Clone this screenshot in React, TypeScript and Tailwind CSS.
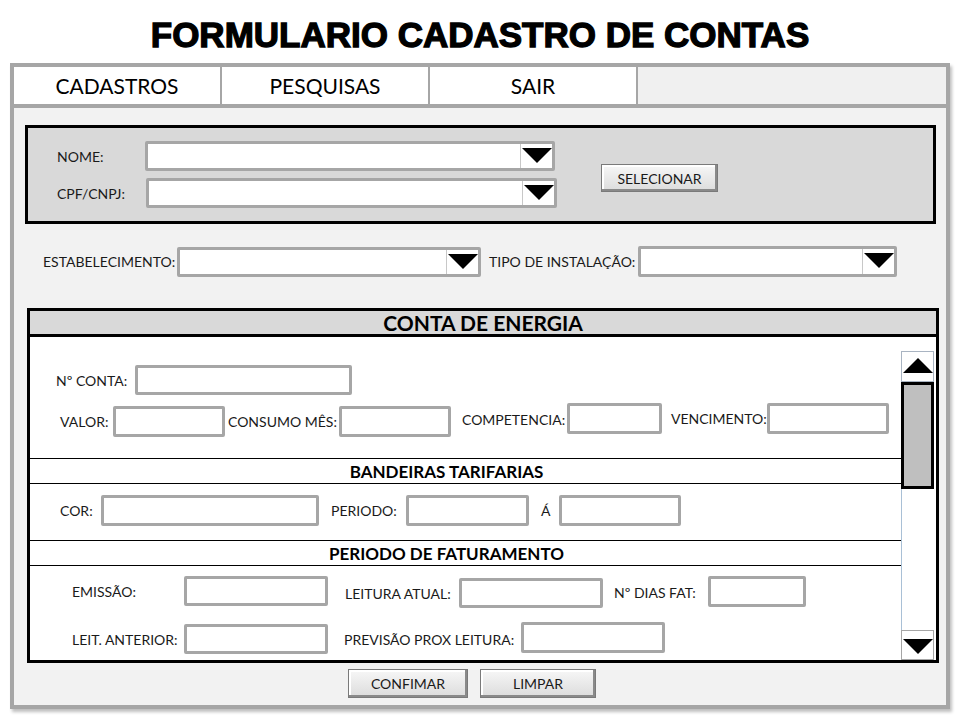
import React from "react";

const Down = ({ w = 30, h = 15 }: { w?: number; h?: number }) => (
  <svg width={w} height={h} viewBox="0 0 30 15">
    <polygon points="0,0 30,0 15,15" fill="#000" />
  </svg>
);
const Up = () => (
  <svg width={30} height={15} viewBox="0 0 30 15">
    <polygon points="0,15 30,15 15,0" fill="#000" />
  </svg>
);

function Dropdown({ className }: { className: string }) {
  return (
    <div className={"flex border-[3px] border-[#a6a6a6] bg-white rounded-[2px] " + className}>
      <div className="flex-1" />
      <div className="w-[32px] border-l border-[#c8c8c8] flex justify-center items-start pt-[4px]">
        <Down />
      </div>
    </div>
  );
}

function Input({ className }: { className: string }) {
  return <div className={"border-[3px] border-[#a6a6a6] bg-white rounded-[2px] shrink-0 " + className} />;
}

function Btn({ label, className }: { label: string; className: string }) {
  return (
    <div
      className={
        "flex items-center justify-center bg-gradient-to-b from-[#f7f7f7] to-[#dcdcdc] border border-[#7a7a7a] shadow-[inset_-2px_-2px_0_#8a8a8a,inset_2px_2px_0_#ffffff] text-[14px] text-[#1a1a1a] shrink-0 " +
        className
      }
    >
      {label}
    </div>
  );
}

function SectionHeader({ title }: { title: string }) {
  return (
    <div className="border-t border-b border-black flex items-center justify-center pr-[38px] pt-[2px] font-bold text-[17px] text-black h-[26px]">
      {title}
    </div>
  );
}

export default function App() {
  return (
    <div className="w-[960px] h-[720px] bg-white font-['Lato',sans-serif] text-[#1a1a1a] overflow-hidden">
      <div className="h-[63px] pt-[6px] flex items-center justify-center">
        <h1 className="font-['Liberation_Sans',Arial,sans-serif] font-bold text-[35px] leading-none text-black [-webkit-text-stroke:1.3px_black]">
          FORMULARIO CADASTRO DE CONTAS
        </h1>
      </div>

      <div className="ml-[10px] w-[940px] h-[646px] border-[4px] border-[#a6a6a6] bg-[#f2f2f2] shadow-[2px_3px_3px_rgba(0,0,0,0.25)]">
        {/* nav */}
        <div className="flex h-[41px] border-b-[4px] border-[#a6a6a6] bg-[#f0f0f0]">
          {["CADASTROS", "PESQUISAS", "SAIR"].map((t) => (
            <div
              key={t}
              className="w-[208px] border-r-[2px] border-[#a6a6a6] bg-white flex items-center justify-center text-[21px] text-black"
            >
              {t}
            </div>
          ))}
        </div>

        {/* top panel */}
        <div className="ml-[11px] mt-[17px] w-[911px] h-[99px] border-[3px] border-black bg-[#d9d9d9] flex items-start pl-[29px] pt-[13px]">
          <div className="flex flex-col gap-[7px]">
            <div className="flex items-center">
              <div className="w-[88px] text-[14px]">NOME:</div>
              <Dropdown className="w-[410px] h-[30px]" />
            </div>
            <div className="flex items-center">
              <div className="w-[89px] text-[14px]">CPF/CNPJ:</div>
              <Dropdown className="w-[411px] h-[30px]" />
            </div>
          </div>
          <Btn label="SELECIONAR" className="ml-[44px] mt-[23px] w-[117px] h-[28px]" />
        </div>

        {/* estabelecimento row */}
        <div className="flex items-center mt-[22px] ml-[29px] h-[31px]">
          <div className="w-[134px] text-[14px]">ESTABELECIMENTO:</div>
          <Dropdown className="w-[304px] h-[30px]" />
          <div className="w-[157px] pl-[8px] text-[14px]">TIPO DE INSTALAÇÃO:</div>
          <Dropdown className="w-[259px] h-[31px]" />
        </div>

        {/* conta de energia */}
        <div className="ml-[13px] mt-[31px] w-[912px] h-[355px] border-[3px] border-black bg-white flex flex-col">
          <div className="h-[26px] bg-[#d9d9d9] border-b-[3px] border-black flex items-center justify-center font-bold text-[21px] text-black">
            CONTA DE ENERGIA
          </div>
          <div className="flex-1 flex">
            <div className="flex-1 flex flex-col text-[14px]">
              {/* Row A */}
              <div className="flex items-center mt-[28px] pl-[26px] h-[30px]">
                <div className="w-[79px]">Nº CONTA:</div>
                <Input className="w-[217px] h-[30px]" />
              </div>
              {/* Row B */}
              <div className="flex items-start mt-[8px] pl-[30px] h-[34px]">
                <div className="flex mt-[3px]">
                  <div className="w-[53px] h-[31px] flex items-center">VALOR:</div>
                  <Input className="w-[112px] h-[31px]" />
                  <div className="w-[114px] pl-[3px] h-[31px] flex items-center">CONSUMO MÊS:</div>
                  <Input className="w-[112px] h-[31px]" />
                </div>
                <div className="flex">
                  <div className="w-[116px] pl-[11px] h-[31px] flex items-center mt-[1px]">COMPETENCIA:</div>
                  <Input className="w-[95px] h-[31px]" />
                  <div className="w-[105px] pl-[9px] h-[31px] flex items-center">VENCIMENTO:</div>
                  <Input className="w-[122px] h-[31px]" />
                </div>
              </div>
              <div className="mt-[21px]">
                <SectionHeader title="BANDEIRAS TARIFARIAS" />
              </div>
              {/* Row D */}
              <div className="flex items-center mt-[11px] pl-[30px] h-[31px]">
                <div className="w-[41px]">COR:</div>
                <Input className="w-[218px] h-[31px]" />
                <div className="w-[87px] pl-[12px]">PERIODO:</div>
                <Input className="w-[123px] h-[31px]" />
                <div className="w-[30px] pl-[12px]">Á</div>
                <Input className="w-[122px] h-[31px]" />
              </div>
              <div className="mt-[14px]">
                <SectionHeader title="PERIODO DE FATURAMENTO" />
              </div>
              {/* Row E */}
              <div className="flex items-start mt-[10px] pl-[42px] h-[32px]">
                <div className="w-[112px] h-[30px] flex items-center">EMISSÃO:</div>
                <Input className="w-[144px] h-[30px]" />
                <div className="flex mt-[2px]">
                  <div className="w-[131px] pl-[17px] h-[30px] flex items-center">LEITURA ATUAL:</div>
                  <Input className="w-[144px] h-[30px]" />
                </div>
                <div className="w-[105px] pl-[11px] h-[31px] flex items-center mt-[1px]">Nº DIAS FAT:</div>
                <Input className="w-[98px] h-[31px]" />
              </div>
              {/* Row F */}
              <div className="flex items-start mt-[14px] pl-[42px] h-[32px]">
                <div className="flex mt-[2px]">
                  <div className="w-[112px] h-[30px] flex items-center">LEIT. ANTERIOR:</div>
                  <Input className="w-[144px] h-[30px]" />
                </div>
                <div className="w-[193px] pl-[16px] h-[31px] flex items-center mt-[2px]">PREVISÃO PROX LEITURA:</div>
                <Input className="w-[144px] h-[31px]" />
              </div>
            </div>
            {/* scrollbar */}
            <div className="w-[33px] mr-[2px] flex flex-col">
              <div className="mt-[14px] h-[31px] border border-[#a9b4c2] bg-white flex items-end justify-center pb-[8px]">
                <Up />
              </div>
              <div className="h-[107px] bg-[#bfbfbf] border-[3px] border-black" />
              <div className="flex-1 border-l border-[#a9c0d6]" />
              <div className="h-[30px] border border-[#a6a6a6] bg-white flex items-start justify-center pt-[8px]">
                <Down />
              </div>
            </div>
          </div>
        </div>

        {/* bottom buttons */}
        <div className="flex mt-[6px] ml-[334px]">
          <Btn label="CONFIMAR" className="w-[120px] h-[29px]" />
          <Btn label="LIMPAR" className="ml-[12px] w-[116px] h-[29px]" />
        </div>
      </div>
    </div>
  );
}
